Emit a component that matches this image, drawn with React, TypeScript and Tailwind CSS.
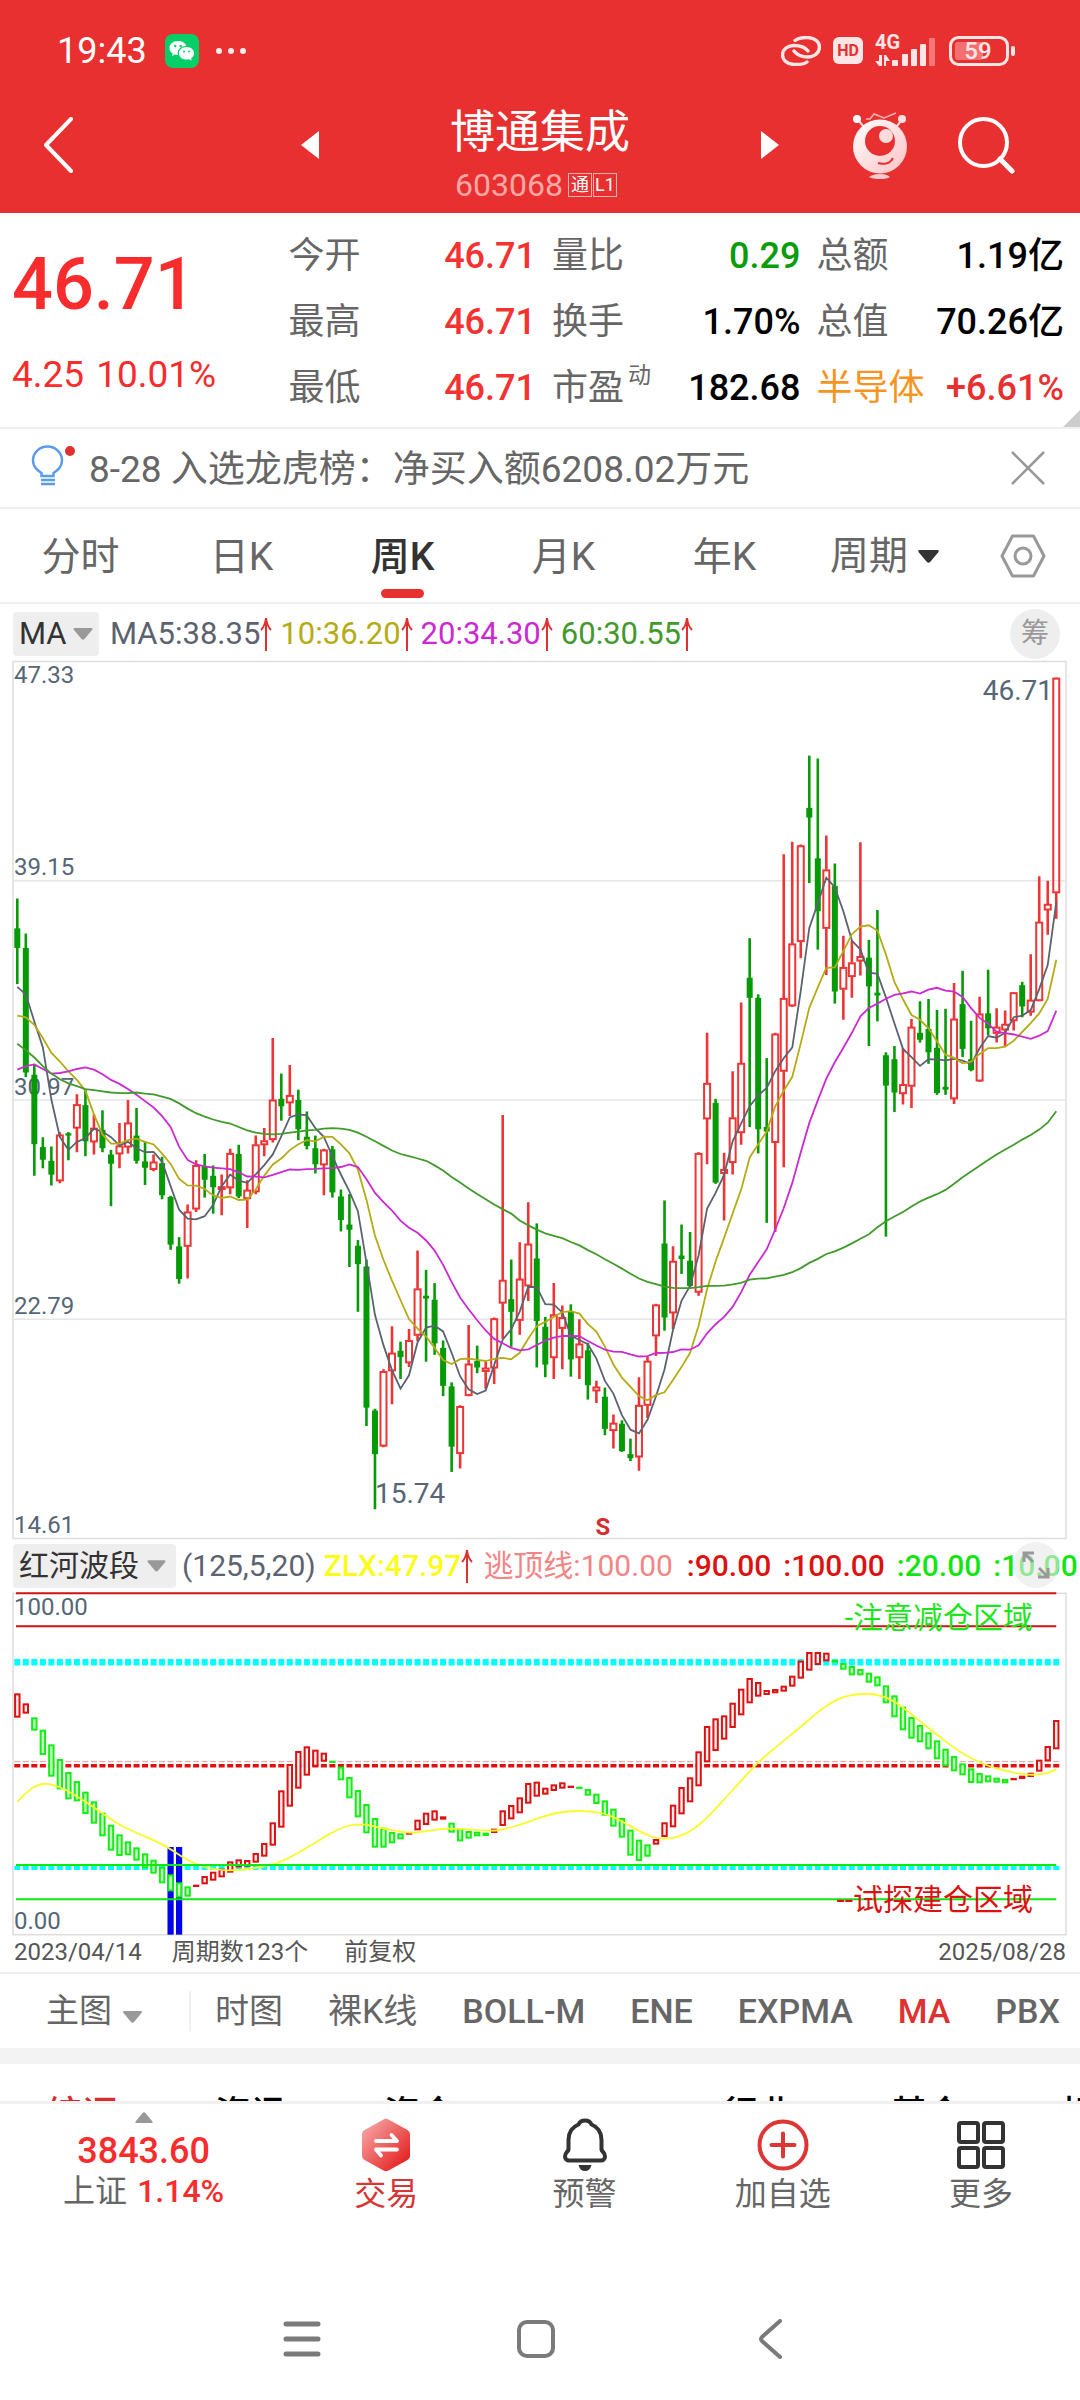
import type { ReactNode } from "react";

type Candle = ["r" | "g", number, number, number, number];
type Bar = ["r" | "g", number, number];
type Point = [number, number];

// [colour, high, body top, body bottom, low], in steps below the top of the axis
const CANDLES: Candle[] = [
  ["g", 433, 485, 519, 582], ["g", 494, 519, 736, 744], ["g", 721, 740, 861, 916], ["g", 849, 866, 888, 903],
  ["g", 865, 890, 914, 933], ["r", 840, 845, 925, 929], ["g", 840, 842, 846, 889], ["r", 774, 792, 833, 875],
  ["g", 765, 793, 856, 882], ["r", 809, 833, 857, 879], ["g", 802, 836, 868, 875], ["g", 871, 879, 895, 969],
  ["r", 824, 864, 878, 903], ["r", 784, 824, 866, 877], ["g", 798, 846, 890, 895], ["g", 856, 891, 902, 932],
  ["r", 879, 892, 905, 908], ["g", 883, 894, 950, 957], ["g", 951, 953, 1036, 1045], ["g", 1023, 1039, 1096, 1104],
  ["r", 966, 979, 1039, 1095], ["r", 889, 898, 974, 979], ["g", 878, 899, 923, 954], ["g", 898, 916, 936, 982],
  ["r", 914, 935, 940, 985], ["r", 869, 877, 937, 948], ["g", 862, 878, 952, 955], ["r", 924, 941, 956, 1007],
  ["r", 846, 862, 944, 948], ["r", 833, 855, 862, 882], ["r", 676, 784, 853, 858], ["g", 738, 782, 795, 820],
  ["r", 723, 776, 789, 812], ["g", 766, 784, 835, 854], ["g", 804, 848, 864, 870], ["g", 846, 868, 896, 912],
  ["r", 869, 871, 897, 950], ["g", 864, 870, 945, 954], ["g", 940, 952, 993, 1013], ["g", 948, 1001, 1010, 1075],
  ["g", 1028, 1038, 1070, 1153], ["g", 1062, 1074, 1320, 1352], ["g", 1322, 1325, 1401, 1497], ["r", 1253, 1257, 1387, 1389],
  ["r", 1178, 1225, 1256, 1314], ["g", 1205, 1221, 1232, 1270], ["r", 1183, 1203, 1242, 1249], ["r", 1046, 1113, 1194, 1204],
  ["g", 1080, 1125, 1130, 1240], ["g", 1103, 1132, 1208, 1228], ["g", 1203, 1216, 1282, 1300], ["g", 1276, 1283, 1388, 1432],
  ["r", 1316, 1318, 1400, 1426], ["r", 1176, 1244, 1299, 1300], ["g", 1212, 1239, 1250, 1260], ["r", 1240, 1251, 1257, 1287],
  ["r", 1163, 1165, 1251, 1279], ["r", 810, 1098, 1138, 1200], ["g", 1062, 1131, 1153, 1214], ["r", 1032, 1096, 1168, 1193],
  ["r", 962, 1035, 1108, 1134], ["g", 999, 1060, 1169, 1250], ["g", 1162, 1179, 1245, 1267], ["r", 1103, 1158, 1233, 1270],
  ["r", 1142, 1163, 1182, 1253], ["g", 1140, 1153, 1236, 1266], ["r", 1166, 1209, 1233, 1270], ["g", 1207, 1220, 1281, 1306],
  ["r", 1273, 1284, 1291, 1312], ["g", 1285, 1301, 1357, 1368], ["r", 1332, 1347, 1360, 1391], ["g", 1342, 1348, 1396, 1397],
  ["g", 1374, 1401, 1408, 1413], ["r", 1267, 1316, 1406, 1430], ["r", 1231, 1239, 1316, 1338], ["r", 1139, 1141, 1195, 1230],
  ["g", 959, 1034, 1163, 1186], ["r", 1039, 1065, 1155, 1183], ["g", 1001, 1055, 1061, 1087], ["g", 1014, 1064, 1108, 1110],
  ["r", 875, 877, 1119, 1125], ["r", 667, 755, 817, 896], ["g", 782, 789, 928, 930], ["r", 876, 905, 912, 994],
  ["r", 734, 815, 893, 914], ["r", 614, 720, 841, 862], ["g", 502, 571, 606, 831], ["g", 600, 606, 835, 877],
  ["g", 711, 831, 839, 998], ["r", 667, 669, 858, 1014], ["r", 356, 607, 734, 901], ["r", 334, 512, 620, 622],
  ["r", 339, 341, 508, 537], ["g", 184, 275, 292, 406], ["g", 189, 363, 455, 522], ["r", 323, 383, 485, 566],
  ["g", 372, 411, 595, 616], ["r", 498, 553, 591, 644], ["r", 507, 545, 569, 606], ["r", 335, 534, 542, 567],
  ["g", 505, 536, 586, 690], ["g", 453, 597, 602, 647], ["g", 701, 706, 759, 1022], ["g", 690, 713, 771, 805],
  ["r", 694, 757, 773, 792], ["r", 643, 657, 760, 798], ["g", 612, 667, 679, 684], ["g", 608, 660, 701, 721],
  ["g", 627, 693, 772, 775], ["g", 625, 761, 766, 775], ["r", 580, 643, 782, 791], ["g", 559, 617, 695, 709],
  ["g", 646, 713, 732, 734], ["r", 604, 634, 751, 752], ["g", 557, 633, 659, 671], ["r", 624, 657, 668, 684],
  ["r", 628, 652, 662, 690], ["r", 596, 597, 646, 663], ["g", 578, 584, 621, 640], ["r", 530, 610, 631, 637],
  ["r", 394, 474, 611, 612], ["r", 402, 443, 453, 496], ["r", 48, 49, 423, 468],
];

// averages for the first weeks, whose closes lie before the visible range
const MA5_LEAD = [587, 600, 647, 692];
const MA10_LEAD = [637, 640, 653, 676, 702, 717, 734, 749, 768];
const MA20_LEAD = [731, 725, 722, 730, 738, 737, 734, 730, 727, 731, 739, 749, 756, 765, 775, 786, 797, 812, 831];
const MA60_LEAD = [
  686, 697, 710, 725, 738, 748, 755, 760, 765, 767, 769, 771, 772, 772, 771, 773, 774, 778, 782, 790, 799, 807, 813, 818,
  822, 825, 831, 837, 841, 843, 844, 843, 841, 839, 837, 836, 834, 833, 834, 836, 841, 848, 856, 864, 872, 878, 882, 886,
  890, 898, 907, 918, 928, 938, 948, 957, 966, 974, 982,
];

const BARS: Bar[] = [
  ["r", 490, 563], ["r", 520, 551], ["g", 562, 602], ["g", 599, 675], ["g", 643, 740], ["g", 687, 778], ["g", 726, 808],
  ["g", 753, 814], ["g", 785, 852], ["g", 814, 881], ["g", 848, 919], ["g", 884, 962], ["g", 913, 978], ["g", 934, 976],
  ["g", 952, 992], ["g", 970, 1015], ["g", 989, 1031], ["g", 1010, 1060], ["g", 1033, 1084], ["g", 1057, 1103], ["g", 1069, 1100],
  ["r", 1064, 1071], ["r", 1038, 1063], ["r", 1025, 1052], ["r", 1016, 1042], ["r", 994, 1028], ["r", 988, 1012], ["r", 990, 1010],
  ["r", 969, 998], ["r", 939, 980], ["r", 877, 947], ["r", 781, 893], ["r", 702, 830], ["r", 663, 776], ["r", 649, 737],
  ["r", 659, 710], ["r", 668, 695], ["g", 692, 696], ["g", 710, 751], ["g", 741, 805], ["g", 780, 862], ["g", 822, 910],
  ["g", 864, 953], ["g", 893, 953], ["g", 906, 940], ["g", 910, 928], ["r", 906, 914], ["r", 869, 901], ["r", 848, 885],
  ["r", 841, 872], ["r", 859, 869], ["g", 878, 908], ["g", 895, 934], ["g", 903, 926], ["g", 905, 919], ["g", 908, 918],
  ["r", 896, 909], ["r", 841, 888], ["r", 825, 868], ["r", 802, 850], ["r", 759, 821], ["r", 755, 800], ["r", 773, 794],
  ["r", 763, 783], ["r", 757, 776], ["r", 767, 773], ["g", 770, 775], ["g", 777, 797], ["g", 791, 822], ["g", 811, 857],
  ["g", 836, 890], ["g", 864, 923], ["g", 899, 977], ["g", 929, 993], ["g", 943, 980], ["r", 927, 944], ["r", 877, 921],
  ["r", 824, 892], ["r", 771, 853], ["r", 742, 817], ["r", 664, 769], ["r", 588, 697], ["r", 565, 663], ["r", 556, 629],
  ["r", 518, 594], ["r", 476, 556], ["r", 444, 520], ["r", 456, 500], ["r", 480, 495], ["r", 477, 490], ["r", 467, 485],
  ["r", 437, 470], ["r", 392, 446], ["r", 366, 422], ["r", 366, 405], ["r", 368, 394], ["g", 390, 398], ["g", 399, 419],
  ["g", 408, 436], ["g", 417, 436], ["g", 428, 458], ["g", 439, 469], ["g", 466, 520], ["g", 496, 562], ["g", 530, 601],
  ["g", 561, 626], ["g", 585, 637], ["g", 607, 658], ["g", 631, 688], ["g", 656, 709], ["g", 678, 724], ["g", 700, 736],
  ["g", 715, 759], ["g", 729, 760], ["g", 736, 757], ["g", 743, 758], ["g", 747, 760], ["r", 744, 749], ["r", 737, 747],
  ["r", 728, 741], ["r", 689, 725], ["r", 648, 694], ["r", 570, 658],
];

const ZLX: Point[] = [
  [0, 815], [1, 790], [2, 770], [3, 762], [4, 764], [5.7, 780], [8.1, 817], [12.1, 885], [17, 943], [20, 990], [22.2, 1012],
  [24.7, 1021], [27.9, 1014], [31.1, 993], [34.4, 947], [36.8, 910], [38.8, 888], [40.8, 884], [43.3, 897], [46.5, 908],
  [50.5, 896], [54.6, 901], [56.6, 900], [59, 884], [61.4, 863], [63.4, 849], [65.8, 843], [68.3, 848], [70.3, 865],
  [72.3, 893], [74.3, 918], [75.9, 926], [77.6, 920], [79.6, 893], [81.6, 847], [84, 780], [86.9, 700], [89.3, 647],
  [92.1, 588], [94.5, 537], [96.6, 505], [99, 492], [101, 495], [103, 515], [105.1, 555], [107.9, 612], [110.7, 665],
  [113.5, 702], [116, 722], [118.8, 734], [120.8, 730], [122, 718],
];

const STEP = 8.516;
const barX = (i: number) => 17.3 + i * STEP;
const priceY = (v: number) => 1.5 + ((v - 20) / 1528) * 877;
const waveY = (v: number) => v / 3 - 62;

const closes = CANDLES.map(([color, , top, bottom]) => (color === "g" ? bottom : top));

function average(days: number, lead: number[]) {
  return CANDLES.map((_, i) => {
    const value = i < lead.length ? lead[i] : closes.slice(i - days + 1, i + 1).reduce((a, b) => a + b, 0) / days;
    return `${barX(i).toFixed(1)},${priceY(value).toFixed(1)}`;
  }).join(" ");
}

function smooth(points: Point[]) {
  const p = points.map(([i, v]) => [barX(i), waveY(v)]);
  let d = `M${p[0][0]} ${p[0][1]}`;
  for (let i = 0; i < p.length - 1; i++) {
    const a = p[Math.max(i - 1, 0)];
    const b = p[i];
    const c = p[i + 1];
    const e = p[Math.min(i + 2, p.length - 1)];
    d += `C${b[0] + (c[0] - a[0]) / 6} ${b[1] + (c[1] - a[1]) / 6} ${c[0] - (e[0] - b[0]) / 6} ${c[1] - (e[1] - b[1]) / 6} ${c[0]} ${c[1]}`;
  }
  return d;
}

function Triangle({ className }: { className: string }) {
  return (
    <svg viewBox="0 0 20 12" className={className} fill="currentColor" aria-hidden="true">
      <path d="M2 0H18Q20.500 0 19 2L11.500 11Q10 12.500 8.500 11L1 2Q-.5 0 2 0Z" />
    </svg>
  );
}

function Picker({ label, value, className, arrow }: { label: string; value: string; className: string; arrow: string }) {
  return (
    <label className={`flex items-center ${className}`}>
      <select aria-label={label} className="cursor-pointer appearance-none bg-transparent outline-none">
        <option>{value}</option>
      </select>
      <Triangle className={arrow} />
    </label>
  );
}

function UpArrow() {
  return (
    <svg viewBox="0 0 12 34" className="h-[34px] w-3 shrink-0" fill="none" stroke="#e03131" strokeWidth="2" aria-hidden="true">
      <path d="M6 2V34M1 13Q5 9 6 1Q7 9 11 13" />
    </svg>
  );
}

function StatusBar() {
  return (
    <div className="flex h-[77px] items-center pt-6 pl-[57px] pr-[65px]">
      <span className="text-[36px] leading-10">19:43</span>
      <svg viewBox="0 0 34 34" className="ml-[18px] size-[34px]" aria-label="微信">
        <rect width="34" height="34" rx="8" fill="#06cf67" />
        <path d="M13 7c-5 0-8.500 3.200-8.500 7 0 2.300 1.200 4.200 3.200 5.500l-.8 2.700 3-1.600c1 .3 2 .5 3.100.5-1.600-6 3.500-9.500 8.300-9.200C20.300 9 17 7 13 7Z" fill="#fff" />
        <path d="M21.500 13c-4.300 0-7.600 2.800-7.600 6.300s3.300 6.300 7.600 6.300c1 0 1.900-.2 2.700-.4l2.600 1.400-.7-2.300c1.800-1.200 3-3 3-5 0-3.500-3.300-6.300-7.600-6.300Z" fill="#fff" />
        <g fill="#06cf67">
          <circle cx="10.200" cy="12" r="1.200" />
          <circle cx="15.700" cy="12" r="1.200" />
          <circle cx="19" cy="17.500" r="1" />
          <circle cx="24" cy="17.500" r="1" />
        </g>
      </svg>
      <svg viewBox="0 0 32 6" className="ml-[17px] h-[6px] w-8" fill="#ffecec" aria-hidden="true">
        <circle cx="3" cy="3" r="3" />
        <circle cx="15" cy="3" r="3" />
        <circle cx="27" cy="3" r="3" />
      </svg>
      <svg viewBox="0 0 40 30" className="ml-auto h-[30px] w-10" fill="none" stroke="#ffe6e6" strokeWidth="3.400" strokeLinecap="round" aria-hidden="true">
        <path d="M14 4.500C18 1 24 1.500 27 1.500C34 2 38.500 6 38.500 11C38.500 17 33 21 27 21C21 21 16 19 13 15" />
        <path d="M26 26C22 29 17 28.500 13 28.500C6 28 1.500 24 1.500 19C1.500 13 7 9.500 13 9.500C19 9.500 24 11 27 15" />
      </svg>
      <svg viewBox="0 0 30 27" className="ml-3 h-[27px] w-[30px]" aria-label="HD">
        <rect width="30" height="27" rx="6" fill="#ffe6e6" />
        <text x="15" y="19" textAnchor="middle" className="font-['Roboto',sans-serif] text-[16px] font-bold" fill="#e83030">HD</text>
      </svg>
      <svg viewBox="0 0 62 40" className="ml-3 h-10 w-[62px]" fill="#ffe6e6" aria-label="4G">
        <text x="0" y="18" className="font-['Roboto',sans-serif] text-[20px] font-bold">4G</text>
        <path d="M4 24V35H7V24ZM0 30L4 35V30ZM9 24H11V35H9ZM11 24L15 30H11Z" />
        <rect x="17" y="29" width="6" height="6" rx="1" />
        <rect x="27" y="23" width="6" height="12" rx="1" />
        <rect x="36" y="18" width="6" height="17" rx="1" />
        <rect x="45" y="13" width="6" height="22" rx="1" />
        <rect x="54" y="7" width="6" height="28" rx="1" opacity=".4" />
      </svg>
      <svg viewBox="0 0 66 30" className="ml-3 h-[30px] w-[66px]" aria-label="59%">
        <rect x="1.500" y="1.500" width="57" height="27" rx="8" fill="none" stroke="#ffe6e6" strokeWidth="3" />
        <rect x="6" y="6" width="28" height="18" rx="3" fill="#f37070" />
        <rect x="62" y="10" width="4" height="10" rx="2" fill="#ffe6e6" />
        <text x="29" y="23" textAnchor="middle" className="font-['Roboto',sans-serif] text-[24px] font-medium" fill="#ffe6e6">59</text>
      </svg>
    </div>
  );
}

function Header() {
  return (
    <header className="bg-[#e93030] text-white">
      <StatusBar />
      <div className="grid h-[136px] grid-cols-[280fr_60fr_400fr_60fr_280fr] items-center">
        <button type="button" aria-label="返回" className="justify-self-start pl-[42px]">
          <svg viewBox="0 0 32 56" className="h-14 w-8" fill="none" stroke="currentColor" strokeWidth="4" strokeLinecap="round" strokeLinejoin="round">
            <path d="M29 2L4 28L29 54" />
          </svg>
        </button>
        <button type="button" aria-label="上一只" className="justify-self-center">
          <svg viewBox="0 0 18 28" className="h-7 w-[18px]" fill="currentColor"><path d="M18 0V28L0 14Z" /></svg>
        </button>
        <div className="pt-5 text-center">
          <h1 className="text-[45px] leading-[52px]">博通集成</h1>
          <p className="mt-2 flex items-center justify-center gap-px pr-2 text-[32px] leading-9 text-[#ffa8a6]">
            <span className="mr-1">603068</span>
            <span className="h-6 w-6 border border-[#ffb4b2] text-[18px] leading-[22px] text-white">通</span>
            <span className="h-6 w-6 border border-[#ffb4b2] text-[18px] leading-[22px] text-white">L1</span>
          </p>
        </div>
        <button type="button" aria-label="下一只" className="justify-self-center">
          <svg viewBox="0 0 18 28" className="h-7 w-[18px]" fill="currentColor"><path d="M0 0V28L18 14Z" /></svg>
        </button>
        <div className="flex items-center justify-end gap-[51px] pr-[65px]">
          <button type="button" aria-label="智能助手">
            <svg viewBox="0 0 54 67" className="h-[67px] w-[54px]">
              <defs>
                <linearGradient id="eye" x1="0" y1="0" x2="1" y2="1">
                  <stop offset="0" stopColor="#fff" />
                  <stop offset="1" stopColor="#ffc2c4" />
                </linearGradient>
              </defs>
              <path d="M13 7H17L21 2L31 6L43 1" fill="none" stroke="#ffb3b3" strokeWidth="1.500" />
              <path d="M5 8L11 15M49 8L43 15" stroke="#ffd9d9" strokeWidth="2" />
              <circle cx="4" cy="7" r="4" fill="#fff" />
              <circle cx="49" cy="7" r="4" fill="#ffe0e0" />
              <circle cx="27" cy="34.500" r="27" fill="url(#eye)" />
              <circle cx="27" cy="29" r="15" fill="#e93030" />
              <circle cx="33" cy="24" r="7" fill="#ffdcdc" />
              <path d="M25 51Q36 54 40 46" fill="none" stroke="#e93030" strokeWidth="2" />
              <path d="M16 65Q20 62 27 62T37 65Q34 67 27 67T16 65Z" fill="#ffcaca" />
            </svg>
          </button>
          <button type="button" aria-label="搜索">
            <svg viewBox="0 0 57 57" className="size-[57px]" fill="none" stroke="currentColor" strokeWidth="4">
              <circle cx="25.500" cy="25.500" r="23.500" />
              <path d="M42 42L54 54" strokeWidth="5" strokeLinecap="round" />
            </svg>
          </button>
        </div>
      </div>
    </header>
  );
}

function Stat({ label, value, tone, labelTone = "text-[#666]", note }: { label: string; value: string; tone: string; labelTone?: string; note?: string }) {
  return (
    <div className="flex h-[66px] items-center justify-between">
      <dt className={`flex text-[36px] leading-[48px] ${labelTone}`}>
        {label}
        {note && <sup className="top-0 pl-1 text-[23px] leading-6">{note}</sup>}
      </dt>
      <dd className={`text-[36px] font-medium leading-[48px] ${tone}`}>{value}</dd>
    </div>
  );
}

function Quote() {
  return (
    <section className="relative grid h-[216px] grid-cols-[272fr_247fr_248fr_247fr] gap-x-4 border-b-2 border-[#f0f0f0] pt-[10px] pr-4">
      <div className="pt-[26px] pl-3 text-[#f82c2c]">
        <p className="text-[72px] font-medium leading-[72px]">46.71</p>
        <p className="mt-8 flex gap-3 text-[37px] leading-[44px]">
          <span>4.25</span>
          <span>10.01%</span>
        </p>
      </div>
      <dl>
        <Stat label="今开" value="46.71" tone="text-[#f33232]" />
        <Stat label="最高" value="46.71" tone="text-[#f33232]" />
        <Stat label="最低" value="46.71" tone="text-[#f33232]" />
      </dl>
      <dl>
        <Stat label="量比" value="0.29" tone="text-[#0a9c0a]" />
        <Stat label="换手" value="1.70%" tone="text-black" />
        <Stat label="市盈" value="182.68" tone="text-black" note="动" />
      </dl>
      <dl>
        <Stat label="总额" value="1.19亿" tone="text-black" />
        <Stat label="总值" value="70.26亿" tone="text-black" />
        <Stat label="半导体" value="+6.61%" tone="text-[#e93030]" labelTone="text-[#f7931e]" />
      </dl>
      <svg viewBox="0 0 17 17" className="absolute right-0 bottom-0 size-[17px]" fill="#ccc" aria-hidden="true"><path d="M17 0V17H0Z" /></svg>
    </section>
  );
}

function Notice() {
  return (
    <section className="flex h-20 items-center border-b-2 border-[#f0f0f0] pr-[33px] pl-[31px] text-[37px] text-[#666]">
      <svg viewBox="0 0 46 46" className="h-[46px] w-[46px]" fill="none" stroke="#5a9bea" strokeWidth="2.500" aria-hidden="true">
        <path d="M10.500 31V28Q2 23 2 15.500A14.500 14 0 0 1 31 15.500Q31 23 22.500 28V31Z" />
        <path d="M10 35H24M10 39H24" />
        <circle cx="39" cy="6" r="5" fill="#e03131" stroke="none" />
      </svg>
      <p className="ml-3 whitespace-pre pt-1 leading-[52px]">8-28 入选龙虎榜：净买入额6208.02万元</p>
      <button type="button" aria-label="关闭" className="ml-auto">
        <svg viewBox="0 0 38 38" className="size-[38px]" stroke="#999" strokeWidth="2.500"><path d="M3 3L35 35M35 3L3 35" /></svg>
      </button>
    </section>
  );
}

const PERIODS = ["分时", "日K", "周K", "月K", "年K"];

function PeriodTabs() {
  return (
    <nav className="grid h-[95px] grid-cols-[repeat(5,161fr)_160fr_115fr] border-b-2 border-[#f0f0f0] text-[39px] text-[#666]">
      {PERIODS.map((name) => {
        const active = name === "周K";
        return (
          <button key={name} type="button" className={`flex flex-col items-center pt-[22px] ${active ? "font-medium text-[#333]" : ""}`}>
            <span className="leading-[52px]">{name}</span>
            {active && <span className="mt-1.5 h-[9px] w-[43px] rounded-full bg-[#e93030]" />}
          </button>
        );
      })}
      <Picker label="周期" value="周期" className="justify-center gap-2 pt-0.5" arrow="h-[13px] w-[23px] text-[#333]" />
      <button type="button" aria-label="图表设置" className="flex items-center justify-center">
        <svg viewBox="0 0 46 44" className="h-11 w-[46px]" fill="none" stroke="#999" strokeWidth="3" strokeLinejoin="round">
          <path d="M12.500 2H33.500L44 22L33.500 42H12.500L2 22Z" />
          <circle cx="23" cy="22" r="8" />
        </svg>
      </button>
    </nav>
  );
}

function AverageLegend() {
  return (
    <div className="flex h-14 items-center pt-1 pr-5 pl-[13px] text-[31px] leading-9">
      <Picker label="主图指标" value="MA" className="mr-[11px] h-11 gap-1.5 rounded bg-[#eee] px-1.5 text-[#333]" arrow="h-3 w-5 text-[#999]" />
      <span className="text-[#5b6370]">MA5:38.35</span>
      <UpArrow />
      <span className="ml-2 text-[#b5ab14]">10:36.20</span>
      <UpArrow />
      <span className="ml-2 text-[#cb2ad3]">20:34.30</span>
      <UpArrow />
      <span className="ml-2 text-[#419a2b]">60:30.55</span>
      <UpArrow />
      <button type="button" className="ml-auto size-[50px] rounded-full bg-[#eee] text-[28px] text-[#999]">筹</button>
    </div>
  );
}

const LEVELS: [string, number, number][] = [
  ["47.33", 20, 23], ["39.15", 402, 215], ["30.97", 784, 435], ["22.79", 1166, 654], ["14.61", 1548, 873],
];

function PriceChart() {
  return (
    <svg viewBox="0 0 1080 880" className="block w-full font-['Roboto',sans-serif]" fill="none" role="img" aria-label="周K线图">
      <rect x="13" y="1.500" width="1053" height="877" stroke="#ddd" strokeWidth="1.500" />
      {LEVELS.slice(1, 4).map(([label, v]) => (
        <path key={label} d={`M13 ${priceY(v)}H1066`} stroke="#e6e6e6" strokeWidth="1.500" />
      ))}
      {LEVELS.map(([label, , y]) => (
        <text key={label} x="14" y={y} className="text-[24px]" fill="#556677">{label}</text>
      ))}
      {CANDLES.map(([color, high, top, bottom, low], i) => {
        const x = barX(i);
        if (color === "g") {
          return (
            <g key={i} fill="#069b06">
              <rect x={x - 1.3} y={priceY(high)} width={2.6} height={priceY(low) - priceY(high)} />
              <rect x={x - 3} y={priceY(top)} width={6} height={priceY(bottom) - priceY(top)} />
            </g>
          );
        }
        return (
          <g key={i} stroke="#ed3535" strokeWidth="2">
            <path d={`M${x} ${priceY(high)}V${priceY(top)}M${x} ${priceY(bottom)}V${priceY(low)}`} strokeWidth="2.600" />
            <rect x={x - 3} y={priceY(top) + 0.5} width={6} height={Math.max(priceY(bottom) - priceY(top) - 1, 1)} />
          </g>
        );
      })}
      <polyline points={average(5, MA5_LEAD)} stroke="#5b6370" strokeWidth="1.800" />
      <polyline points={average(10, MA10_LEAD)} stroke="#b5ab14" strokeWidth="1.800" />
      <polyline points={average(20, MA20_LEAD)} stroke="#cb2ad3" strokeWidth="1.800" />
      <polyline points={average(60, MA60_LEAD)} stroke="#419a2b" strokeWidth="1.800" />
      <text x="1053" y="40" textAnchor="end" className="text-[28px]" fill="#556677">46.71</text>
      <text x="375" y="843" className="text-[28px]" fill="#556677">15.74</text>
      <text x="603" y="875" textAnchor="middle" className="text-[24px] font-bold" fill="#d42f2f">S</text>
    </svg>
  );
}

function WaveLegend() {
  return (
    <div className="relative flex h-[52px] items-center overflow-hidden pl-[13px] text-[30px] leading-9 whitespace-nowrap">
      <Picker label="副图指标" value="红河波段" className="h-11 gap-2 rounded bg-[#eee] pr-2.5 pl-1.5 text-[#333]" arrow="h-3 w-[19px] text-[#999]" />
      <span className="ml-1.5 text-[#5b6370]">(125,5,20)</span>
      <span className="ml-2 font-medium text-[#fcfc1c]">ZLX:47.97</span>
      <UpArrow />
      <span className="ml-2.5 text-[#f28585]">逃顶线:100.00</span>
      <span className="ml-3.5 font-medium text-[#dd1111]">:90.00</span>
      <span className="ml-3 font-medium text-[#dd1111]">:100.00</span>
      <span className="ml-3 font-medium text-[#12e612]">:20.00</span>
      <span className="ml-3 font-medium text-[#12e612]">:10.00</span>
      <button type="button" aria-label="放大" className="absolute top-0.5 right-[21px] size-[46px] rounded-full bg-[#e8e8e8]/60">
        <svg viewBox="0 0 46 46" className="size-[46px]" fill="none" stroke="#999" strokeWidth="3">
          <path d="M20 20L12 12M11 20V11H21M26 26L34 34M35 26V35H25" />
        </svg>
      </button>
    </div>
  );
}

function WaveChart() {
  const last = barX(CANDLES.length - 1);
  const dashes = `6 ${STEP - 6}`;
  return (
    <svg viewBox="0 0 1080 344" className="block w-full font-['Roboto','Noto_Sans_CJK_SC',sans-serif]" fill="none" role="img" aria-label="红河波段指标图">
      <rect x="13" y="1.300" width="1053" height="341.400" stroke="#ddd" strokeWidth="1.500" />
      <text x="14" y="23" className="text-[24px]" fill="#556677">100.00</text>
      <text x="14" y="337" className="text-[24px]" fill="#556677">0.00</text>
      <path d={`M16 ${waveY(190)}H${last}M16 ${waveY(289)}H${last}`} stroke="#d01414" strokeWidth="2" />
      <path d={`M14.300 ${waveY(397)}H${last + 3}`} stroke="#0ff" strokeWidth="6.500" strokeDasharray={dashes} />
      <path d={`M14.300 ${waveY(1014)}H${last + 3}`} stroke="#0ff" strokeWidth="4" strokeDasharray={dashes} />
      {[18, 19].map((i) => (
        <rect key={i} x={barX(i) - 3.1} y={waveY(951)} width={6.2} height={waveY(1214) - waveY(951)} fill="#0303ee" />
      ))}
      <path d={`M14.300 ${waveY(707)}H${last + 3}`} stroke="#e01010" strokeWidth="3.500" strokeDasharray={dashes} />
      <path d={`M14.300 ${waveY(695)}H${last + 3}`} stroke="#f09a9a" strokeWidth="1" strokeDasharray={dashes} />
      {BARS.map(([color, top, bottom], i) => (
        <rect
          key={i}
          x={barX(i) - 2.2}
          y={waveY(top) + 1}
          width={4.4}
          height={Math.max(waveY(bottom) - waveY(top) - 2, 0.3)}
          fill={color === "r" ? "#fff0f0" : "#c8ffc8"}
          stroke={color === "r" ? "#dd1111" : "#14ee14"}
          strokeWidth="2"
        />
      ))}
      <path d={smooth(ZLX)} stroke="#fafa28" strokeWidth="1.800" />
      <path d={`M16 ${waveY(1005)}H${last}M16 ${waveY(1108)}H${last}`} stroke="#10e810" strokeWidth="2" />
      <text x="1033" y="36" textAnchor="end" className="text-[30px]" fill="#1ae61a">-注意减仓区域</text>
      <text x="1033" y="318" textAnchor="end" className="text-[30px]" fill="#dd1111">--试探建仓区域</text>
    </svg>
  );
}

const INDICATORS = ["时图", "裸K线", "BOLL-M", "ENE", "EXPMA", "MA", "PBX"];

function IndicatorTabs() {
  return (
    <nav className="flex h-[76px] items-center overflow-hidden border-t-2 border-[#eee] pl-[46px] text-[33px] whitespace-nowrap text-[#666]">
      <Picker label="主图" value="主图" className="gap-2.5" arrow="mt-3 h-3 w-[21px] text-[#999]" />
      <div className="ml-[46px] flex gap-[45px] border-l-2 border-[#f0f0f0] pl-6 text-[34px]">
        {INDICATORS.map((name) => (
          <button
            key={name}
            type="button"
            className={`leading-10 ${name === "MA" ? "text-[#e03131]" : ""} ${/^[A-Z]/.test(name) ? "font-medium" : ""}`}
          >
            {name}
          </button>
        ))}
      </div>
    </nav>
  );
}

const SECTIONS = ["综评", "资讯", "资金", "F10", "行业", "基金", "机构"];

function SectionTabs() {
  return (
    <nav className="flex h-[37px] gap-[97px] overflow-hidden bg-white pt-[25px] pl-[46px] text-[36px] font-medium whitespace-nowrap text-black">
      {SECTIONS.map((name, i) => (
        <button key={name} type="button" className={`w-[72px] shrink-0 leading-[52px] ${i === 0 ? "text-[#d42f2f]" : ""}`}>{name}</button>
      ))}
    </nav>
  );
}

function NavItem({ label, tone = "text-[#666]", children }: { label: string; tone?: string; children: ReactNode }) {
  return (
    <button type="button" className="flex flex-col items-center pt-3.5">
      {children}
      <span className={`mt-0.5 text-[32px] leading-10 ${tone}`}>{label}</span>
    </button>
  );
}

function BottomNav() {
  return (
    <nav className="grid h-[176px] grid-cols-[287fr_198fr_198fr_198fr_198fr] border-t-[3px] border-[#f0f0f0]">
      <button type="button" className="flex flex-col items-center pt-2 text-[#f82c2c]">
        <Triangle className="h-[11px] w-5 rotate-180 text-[#999]" />
        <span className="mt-2 text-[36px] font-medium leading-10">3843.60</span>
        <span className="flex gap-2.5 text-[32px] leading-10">
          <span className="text-[#666]">上证</span>
          <span className="font-medium">1.14%</span>
        </span>
      </button>
      <NavItem label="交易" tone="text-[#d83535]">
        <svg viewBox="0 0 54 54" className="size-[54px]">
          <defs>
            <linearGradient id="trade" x1="0" y1="0" x2="1" y2="1">
              <stop offset="0.150" stopColor="#f59a9a" />
              <stop offset="0.850" stopColor="#e62626" />
            </linearGradient>
          </defs>
          <path d="M24.500 1.500Q27 0 29.500 1.500L48.500 12Q51 13.500 51 16V38Q51 40.500 48.500 42L29.500 52.500Q27 54 24.500 52.500L5.500 42Q3 40.500 3 38V16Q3 13.500 5.500 12Z" fill="url(#trade)" />
          <path d="M17 23H38L32.500 17M38 31.500H17L22 37.500" fill="none" stroke="#fff" strokeWidth="3.800" strokeLinecap="round" strokeLinejoin="round" />
        </svg>
      </NavItem>
      <NavItem label="预警">
        <svg viewBox="0 0 54 54" className="size-[54px]" fill="none" stroke="#333" strokeWidth="4" strokeLinejoin="round">
          <path d="M27 2.500C24 2.500 21.500 4 20.500 6.500C14 9 10.500 15 10.500 22V31.500C10 34 7 34.500 7 38.500C7 41 9 42.500 11 42.500H43C45 42.500 47 41 47 38.500C47 34.500 44 34 43.500 31.500V22C43.500 15 40 9 33.500 6.500C32.500 4 30 2.500 27 2.500Z" />
          <path d="M20.500 47H33.500Q32 53 27 53T20.500 47Z" fill="#333" stroke="none" />
        </svg>
      </NavItem>
      <NavItem label="加自选">
        <svg viewBox="0 0 54 54" className="size-[54px]" fill="none" stroke="#de3535" strokeWidth="4" strokeLinecap="round">
          <circle cx="27" cy="27" r="23.500" />
          <path d="M27 15.500V38.500M15.500 27H38.500" />
        </svg>
      </NavItem>
      <NavItem label="更多">
        <svg viewBox="0 0 54 54" className="size-[54px]" fill="none" stroke="#333" strokeWidth="4">
          <rect x="5" y="5" width="19" height="19" rx="2" />
          <rect x="30" y="5" width="19" height="19" rx="2" />
          <rect x="5" y="30" width="19" height="19" rx="2" />
          <rect x="30" y="30" width="19" height="19" rx="2" />
        </svg>
      </NavItem>
    </nav>
  );
}

function SystemNav() {
  return (
    <div className="grid h-[124px] grid-cols-[184fr_236fr_232fr_236fr_192fr] items-center text-[#7a7a7a]">
      <button type="button" aria-label="最近任务" className="col-start-2 justify-self-center">
        <svg viewBox="0 0 38 38" className="size-[38px]" stroke="currentColor" strokeWidth="5" strokeLinecap="round"><path d="M3 4H35M3 19H35M3 34H35" /></svg>
      </button>
      <button type="button" aria-label="主屏幕" className="justify-self-center">
        <svg viewBox="0 0 38 38" className="size-[38px]" fill="none" stroke="currentColor" strokeWidth="4"><rect x="2" y="2" width="34" height="34" rx="8" /></svg>
      </button>
      <button type="button" aria-label="返回桌面" className="justify-self-center">
        <svg viewBox="0 0 24 40" className="h-10 w-6" fill="none" stroke="currentColor" strokeWidth="4" strokeLinecap="round"><path d="M22 2L4 18Q2 20 4 22L22 38" /></svg>
      </button>
    </div>
  );
}

export default function App() {
  return (
    <div className="w-full overflow-hidden bg-white font-['Roboto','Noto_Sans_CJK_SC',sans-serif]">
      <Header />
      <main>
        <Quote />
        <Notice />
        <PeriodTabs />
        <AverageLegend />
        <PriceChart />
        <WaveLegend />
        <WaveChart />
        <div className="flex h-[36px] items-center pr-3.5 pb-1 pl-3.5 text-[24px] leading-8 text-[#555]">
          <time>2023/04/14</time>
          <span className="ml-[30px]">周期数123个</span>
          <span className="ml-9">前复权</span>
          <time className="ml-auto">2025/08/28</time>
        </div>
        <IndicatorTabs />
        <div className="h-4 bg-[#f3f3f3]" />
        <SectionTabs />
      </main>
      <BottomNav />
      <SystemNav />
    </div>
  );
}
